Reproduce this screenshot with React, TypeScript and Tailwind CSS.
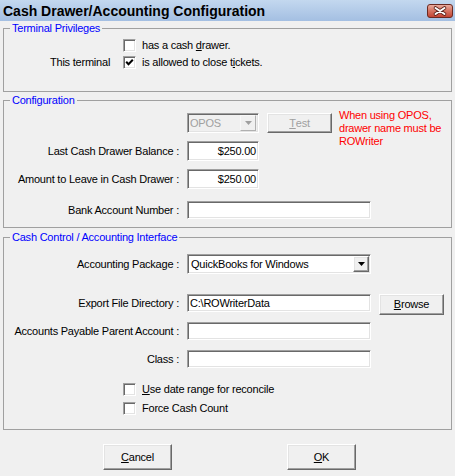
import React from 'react';

const sunken =
  'border border-t-[#a0a0a0] border-l-[#a0a0a0] border-b-white border-r-white shadow-[inset_1px_1px_0_#696969,inset_-1px_-1px_0_#e3e3e3]';
const raised =
  'border border-t-white border-l-white border-b-[#696969] border-r-[#696969] shadow-[inset_-1px_-1px_0_#a0a0a0,inset_1px_1px_0_#e3e3e3]';

const GroupBox: React.FC<{ title: string; className: string; children: React.ReactNode }> = ({ title, className, children }) => (
  <fieldset className={`mx-[3px] border border-[#a0a0a0] p-0 ${className}`}>
    <legend className="ml-[6px] px-[2px] leading-[14px] text-[#0000ff]">{title}</legend>
    {children}
  </fieldset>
);

const Row: React.FC<{ label?: string; className: string; children: React.ReactNode }> = ({ label, className, children }) => (
  <div className={`flex items-center ${className}`}>
    <div className="w-[175px] shrink-0 whitespace-nowrap text-right">{label}</div>
    <div className="ml-[8px] flex items-start self-start">{children}</div>
  </div>
);

const TextBox: React.FC<{ className: string; value?: string; right?: boolean }> = ({ className, value, right }) => (
  <div className={`${className} ${sunken} flex items-center bg-white px-[2px] whitespace-nowrap ${right ? 'justify-end' : ''}`}>
    {value}
  </div>
);

const Arrow: React.FC<{ color: string }> = ({ color }) => (
  <svg width="7" height="4" viewBox="0 0 7 4">
    <path d="M0 0 H7 L3.5 4 Z" fill={color} />
  </svg>
);

const CheckBox: React.FC<{ checked?: boolean; children: React.ReactNode; className: string }> = ({ checked, children, className }) => (
  <div className={`ml-[119px] flex h-[13px] items-center ${className}`}>
    <div className={`h-[13px] w-[13px] shrink-0 bg-white ${sunken} flex items-center justify-center`}>
      {checked && (
        <svg width="9" height="9" viewBox="0 0 9 9">
          <path d="M1.2 3.8 L3.5 6.3 L7.8 1.8" fill="none" stroke="#000" strokeWidth="2" />
        </svg>
      )}
    </div>
    <span className="ml-[6px] whitespace-nowrap">{children}</span>
  </div>
);

const Button: React.FC<{ className: string; children: React.ReactNode; disabled?: boolean }> = ({ className, children, disabled }) => (
  <div
    className={`${className} ${raised} flex items-center justify-center bg-[#f0f0f0] ${disabled ? 'text-[#a0a0a0]' : 'text-black'}`}
  >
    {children}
  </div>
);

export default function App() {
  return (
    <div className="flex h-[476px] w-[455px] flex-col bg-[#f0f0f0] font-['Liberation_Sans',Arial,sans-serif] text-[11px] leading-[13px] tracking-[-0.22px] text-black">
      <div className="flex h-[21px] shrink-0 items-center justify-between bg-linear-to-b from-[#c3d8ef] to-[#a4bfe2] pl-[3px] pr-[2px]">
        <span className="text-[14px] font-bold leading-[16px] tracking-normal">Cash Drawer/Accounting Configuration</span>
        <svg width="26" height="14" viewBox="0 0 26 14" className="mt-[1px]">
          <defs>
            <linearGradient id="closeGrad" x1="0" y1="0" x2="0" y2="1">
              <stop offset="0" stopColor="#eab0a3" />
              <stop offset="0.45" stopColor="#d77866" />
              <stop offset="1" stopColor="#c2402f" />
            </linearGradient>
          </defs>
          <rect x="0.5" y="0.5" width="25" height="13" rx="2.5" fill="url(#closeGrad)" stroke="#6b2a22" />
          <path d="M8.5 4 L17.5 10 M17.5 4 L8.5 10" stroke="#5a2018" strokeWidth="3.6" strokeLinecap="round" />
          <path d="M8.5 4 L17.5 10 M17.5 4 L8.5 10" stroke="#ffffff" strokeWidth="2" strokeLinecap="round" />
        </svg>
      </div>

      <GroupBox title="Terminal Privileges" className="h-[71px]">
        <CheckBox className="mt-[4px]">
          has a cash <span className="underline">d</span>rawer.
        </CheckBox>
        <CheckBox checked className="mt-[4px]">
          is allowed to close t<span className="underline">i</span>ckets.
        </CheckBox>
        <div className="-mt-[13px] ml-[46px] flex h-[13px] w-fit items-center">This terminal</div>
      </GroupBox>

      <GroupBox title="Configuration" className="mt-[1px] h-[135px]">
        <Row className="mt-[6px] h-[20px]">
          <div className={`h-[20px] w-[72px] ${sunken} flex items-center justify-between bg-[#f0f0f0] pl-[2px] pr-[2px] text-[#a0a0a0]`}>
            <span>OPOS</span>
            <div className="flex h-[16px] w-[16px] items-center justify-center border border-t-[#f8f8f8] border-l-[#f8f8f8] border-b-[#b0b0b0] border-r-[#b0b0b0] bg-[#f0f0f0]">
              <Arrow color="#a0a0a0" />
            </div>
          </div>
          <Button className="ml-[8px] h-[20px] w-[65px]" disabled>
            <span className="underline">T</span>est
          </Button>
          <div className="-mt-[4px] ml-[7px] whitespace-nowrap text-[#ff0000]">
            When using OPOS,
            <br />
            drawer name must be
            <br />
            ROWriter
          </div>
        </Row>
        <Row label="Last Cash Drawer Balance :" className="mt-[8px] h-[20px]">
          <TextBox className="h-[20px] w-[72px]" value="$250.00" right />
        </Row>
        <Row label="Amount to Leave in Cash Drawer :" className="mt-[8px] h-[20px]">
          <TextBox className="h-[20px] w-[72px]" value="$250.00" right />
        </Row>
        <Row label="Bank Account Number :" className="mt-[12px] h-[18px]">
          <TextBox className="h-[18px] w-[184px]" />
        </Row>
      </GroupBox>

      <GroupBox title="Cash Control / Accounting Interface" className="mt-[2px] h-[200px]">
        <Row label="Accounting Package :" className="mt-[10px] h-[20px]">
          <div className={`h-[20px] w-[184px] ${sunken} flex items-center justify-between bg-white pl-[3px] pr-[1px]`}>
            <span className="whitespace-nowrap">QuickBooks for Windows</span>
            <div className={`flex h-[16px] w-[16px] items-center justify-center bg-[#f0f0f0] ${raised}`}>
              <Arrow color="#000" />
            </div>
          </div>
        </Row>
        <Row label="Export File Directory :" className="mt-[20px] h-[18px]">
          <TextBox className="h-[18px] w-[184px]" value="C:\ROWriterData" />
          <Button className="ml-[8px] h-[21px] w-[65px]">
            <span className="underline">B</span>rowse
          </Button>
        </Row>
        <Row label="Accounts Payable Parent Account :" className="mt-[10px] h-[18px]">
          <TextBox className="h-[18px] w-[184px]" />
        </Row>
        <Row label="Class :" className="mt-[10px] h-[18px]">
          <TextBox className="h-[18px] w-[184px]" />
        </Row>
        <CheckBox className="mt-[15px]">
          <span className="underline">U</span>se date range for reconcile
        </CheckBox>
        <CheckBox className="mt-[6px]">Force Cash Count</CheckBox>
      </GroupBox>

      <div className="mt-[14px] flex pl-[103px]">
        <Button className="h-[26px] w-[69px]">
          <span className="underline">C</span>ancel
        </Button>
        <Button className="ml-[115px] h-[26px] w-[69px]">
          <span className="underline">O</span>K
        </Button>
      </div>
    </div>
  );
}
